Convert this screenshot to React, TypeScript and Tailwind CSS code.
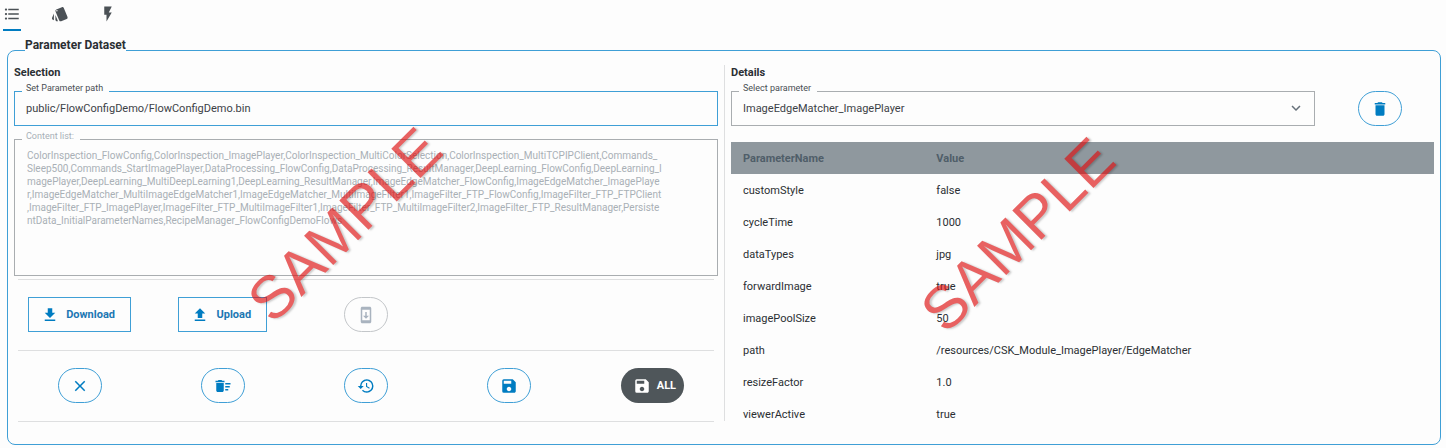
import type { ReactNode } from "react";
import {
  MdClose,
  MdDelete,
  MdDeleteSweep,
  MdExpandMore,
  MdFlashOn,
  MdFormatListBulleted,
  MdHistory,
  MdSave,
  MdStyle,
  MdSystemUpdate,
} from "react-icons/md";

const contentList = [
  "ColorInspection_FlowConfig,ColorInspection_ImagePlayer,ColorInspection_MultiColorSelection,ColorInspection_MultiTCPIPClient,Commands_",
  "Sleep500,Commands_StartImagePlayer,DataProcessing_FlowConfig,DataProcessing_ResultManager,DeepLearning_FlowConfig,DeepLearning_I",
  "magePlayer,DeepLearning_MultiDeepLearning1,DeepLearning_ResultManager,ImageEdgeMatcher_FlowConfig,ImageEdgeMatcher_ImagePlaye",
  "r,ImageEdgeMatcher_MultiImageEdgeMatcher1,ImageEdgeMatcher_MultiImageFilter1,ImageFilter_FTP_FlowConfig,ImageFilter_FTP_FTPClient",
  ",ImageFilter_FTP_ImagePlayer,ImageFilter_FTP_MultiImageFilter1,ImageFilter_FTP_MultiImageFilter2,ImageFilter_FTP_ResultManager,Persiste",
  "ntData_InitialParameterNames,RecipeManager_FlowConfigDemoFlows",
].join("\n");

const parameters = [
  ["customStyle", "false"],
  ["cycleTime", "1000"],
  ["dataTypes", "jpg"],
  ["forwardImage", "true"],
  ["imagePoolSize", "50"],
  ["path", "/resources/CSK_Module_ImagePlayer/EdgeMatcher"],
  ["resizeFactor", "1.0"],
  ["viewerActive", "true"],
];

function TransferIcon({ d }: { d: string }) {
  return (
    <svg viewBox="0 0 24 24" className="size-[18px] text-[#007cc1]" fill="currentColor" aria-hidden="true">
      <path d={d} />
    </svg>
  );
}

function RoundButton({ label, disabled, children }: { label: string; disabled?: boolean; children: ReactNode }) {
  return (
    <button
      type="button"
      aria-label={label}
      disabled={disabled}
      className="flex h-[35px] w-11 items-center justify-center rounded-full border border-[#3f9fd6] text-[#007cc1] disabled:border-[#c3c6c9] disabled:text-[#a9b3bf]"
    >
      {children}
    </button>
  );
}

function OutlineButton({ icon, children }: { icon: ReactNode; children: ReactNode }) {
  return (
    <button
      type="button"
      className="flex h-[35px] items-center gap-[7px] border border-[#3f9fd6] pt-px pr-[15px] pl-3 text-[11px] font-bold text-[#1c77b3]"
    >
      {icon}
      {children}
    </button>
  );
}

function FieldLabel({ htmlFor, muted, children }: { htmlFor: string; muted?: boolean; children: ReactNode }) {
  return (
    <label
      htmlFor={htmlFor}
      className={
        "absolute -top-2 left-2 bg-[#fdfdfd] pr-1.5 pl-1 text-[9px] leading-[10px] " +
        (muted ? "text-[#a7b0b7]" : "text-[#4a4f54]")
      }
    >
      {children}
    </label>
  );
}

function Watermark({ place }: { place: string }) {
  return (
    <span
      aria-hidden="true"
      className={
        "pointer-events-none absolute -translate-1/2 -rotate-45 font-['Liberation_Sans',sans-serif] text-[60px] leading-none text-[#dd0e0e] opacity-65 [text-shadow:1px_2px_2px_rgba(0,0,0,0.3)] " +
        place
      }
    >
      SAMPLE
    </span>
  );
}

export default function App() {
  return (
    <div className="min-h-screen bg-[#fdfdfd] font-[Roboto,sans-serif] text-[11px] text-[#2b2f33]">
      <nav className="flex h-[31px] gap-[30px] pl-[3px] text-[#4b5156]" role="tablist">
        <button type="button" role="tab" aria-label="Parameters" aria-selected="true" className="flex w-[18px] justify-center border-b-2 border-[#007cc1] pt-[5px]">
          <MdFormatListBulleted className="size-[18px] shrink-0" />
        </button>
        <button type="button" role="tab" aria-label="Style" aria-selected="false" className="flex w-[18px] justify-center pt-[5px]">
          <MdStyle className="size-[18px] shrink-0" />
        </button>
        <button type="button" role="tab" aria-label="Actions" aria-selected="false" className="flex w-[18px] justify-center pt-[5px]">
          <MdFlashOn className="size-[18px] shrink-0" />
        </button>
      </nav>

      <fieldset className="mt-1.5 mr-[5px] ml-[7px] rounded-lg border border-[#3f9fd6] pb-[22px]">
        <legend className="ml-[17px] pb-[10px] text-[12px] leading-4 font-bold">Parameter Dataset</legend>
        <div className="flex items-start">
          <section className="relative w-1/2 px-1.5 pt-0.5">
            <h2 className="text-[11px] leading-4 font-bold">Selection</h2>
            <div className="relative mt-[10px]">
              <FieldLabel htmlFor="path">Set Parameter path</FieldLabel>
              <input
                id="path"
                defaultValue="public/FlowConfigDemo/FlowConfigDemo.bin"
                className="block h-[35px] w-full border border-[#3f9fd6] bg-transparent px-[11px] text-[11px] text-[#3c4146] outline-none"
              />
            </div>
            <div className="relative mt-[13px]">
              <FieldLabel htmlFor="content" muted>Content list:</FieldLabel>
              <textarea
                id="content"
                disabled
                value={contentList}
                className="block h-[137px] w-full resize-none border border-[#a9adb0] bg-transparent px-3 pt-[9px] text-[10px] leading-[13px] break-all text-[#a9b0b6]"
              />
            </div>
            <div className="mx-1 mt-[3px] border-t border-[#dedfe0]" />
            <div className="-mx-1.5 grid h-[70px] grid-cols-5 place-items-center pb-px">
              <OutlineButton icon={<TransferIcon d="M5 20h14v-2H5v2zM19 9h-4V3H9v6H5l7 7 7-7z" />}>Download</OutlineButton>
              <OutlineButton icon={<TransferIcon d="M9 16v-6H5l7-7 7 7h-4v6H9zm-4 4v-2h14v2H5z" />}>Upload</OutlineButton>
              <RoundButton label="Load on device" disabled>
                <MdSystemUpdate className="size-[18px]" />
              </RoundButton>
            </div>
            <div className="mx-1 border-t border-[#dedfe0]" />
            <div className="-mx-1.5 grid h-[70px] grid-cols-5 place-items-center pb-px">
              <RoundButton label="Close">
                <MdClose className="size-[18px]" />
              </RoundButton>
              <RoundButton label="Clear list">
                <MdDeleteSweep className="size-[18px]" />
              </RoundButton>
              <RoundButton label="Restore">
                <MdHistory className="size-[18px]" />
              </RoundButton>
              <RoundButton label="Save">
                <MdSave className="size-[18px]" />
              </RoundButton>
              <button
                type="button"
                className="flex h-[35px] items-center gap-1.5 rounded-full bg-[#4f565a] pt-px pr-2 pl-3 text-[11px] font-bold text-white"
              >
                <MdSave className="size-[18px]" />
                ALL
              </button>
            </div>
            <div className="mx-1 border-t border-[#dedfe0]" />
            <Watermark place="top-[45%] left-[47%]" />
          </section>

          <div className="relative w-1/2 pt-0.5">
            <section className="h-[356px] border-l border-[#dedfe0]">
              <h2 className="pl-1.5 text-[11px] leading-4 font-bold">Details</h2>
              <div className="mt-[10px] grid grid-cols-6">
                <div className="relative col-span-5 mx-1.5">
                  <FieldLabel htmlFor="parameter">Select parameter</FieldLabel>
                  <select
                    id="parameter"
                    className="block h-[35px] w-full appearance-none border border-[#a9adb0] bg-transparent px-[11px] pt-0.5 text-[11px] text-[#3c4146] outline-none"
                  >
                    <option>ImageEdgeMatcher_ImagePlayer</option>
                  </select>
                  <MdExpandMore className="pointer-events-none absolute top-2 right-[10px] size-[18px] text-[#66707a]" />
                </div>
                <div className="flex justify-center">
                  <RoundButton label="Delete parameter">
                    <MdDelete className="size-[18px]" />
                  </RoundButton>
                </div>
              </div>
              <div className="mt-4 px-1.5">
                <table className="w-full table-fixed text-left">
                  <thead>
                    <tr className="h-8 bg-[#8f989e] text-[#4f5e69]">
                      <th className="w-[27.5%] px-3 pt-0.5 font-bold">ParameterName</th>
                      <th className="px-3 pt-0.5 font-bold">Value</th>
                    </tr>
                  </thead>
                  <tbody>
                    {parameters.map(([name, value]) => (
                      <tr key={name} className="h-8">
                        <td className="px-3 pt-0.5">{name}</td>
                        <td className="px-3 pt-0.5">{value}</td>
                      </tr>
                    ))}
                  </tbody>
                </table>
              </div>
            </section>
            <Watermark place="top-[48%] left-[41%]" />
          </div>
        </div>
      </fieldset>
    </div>
  );
}
